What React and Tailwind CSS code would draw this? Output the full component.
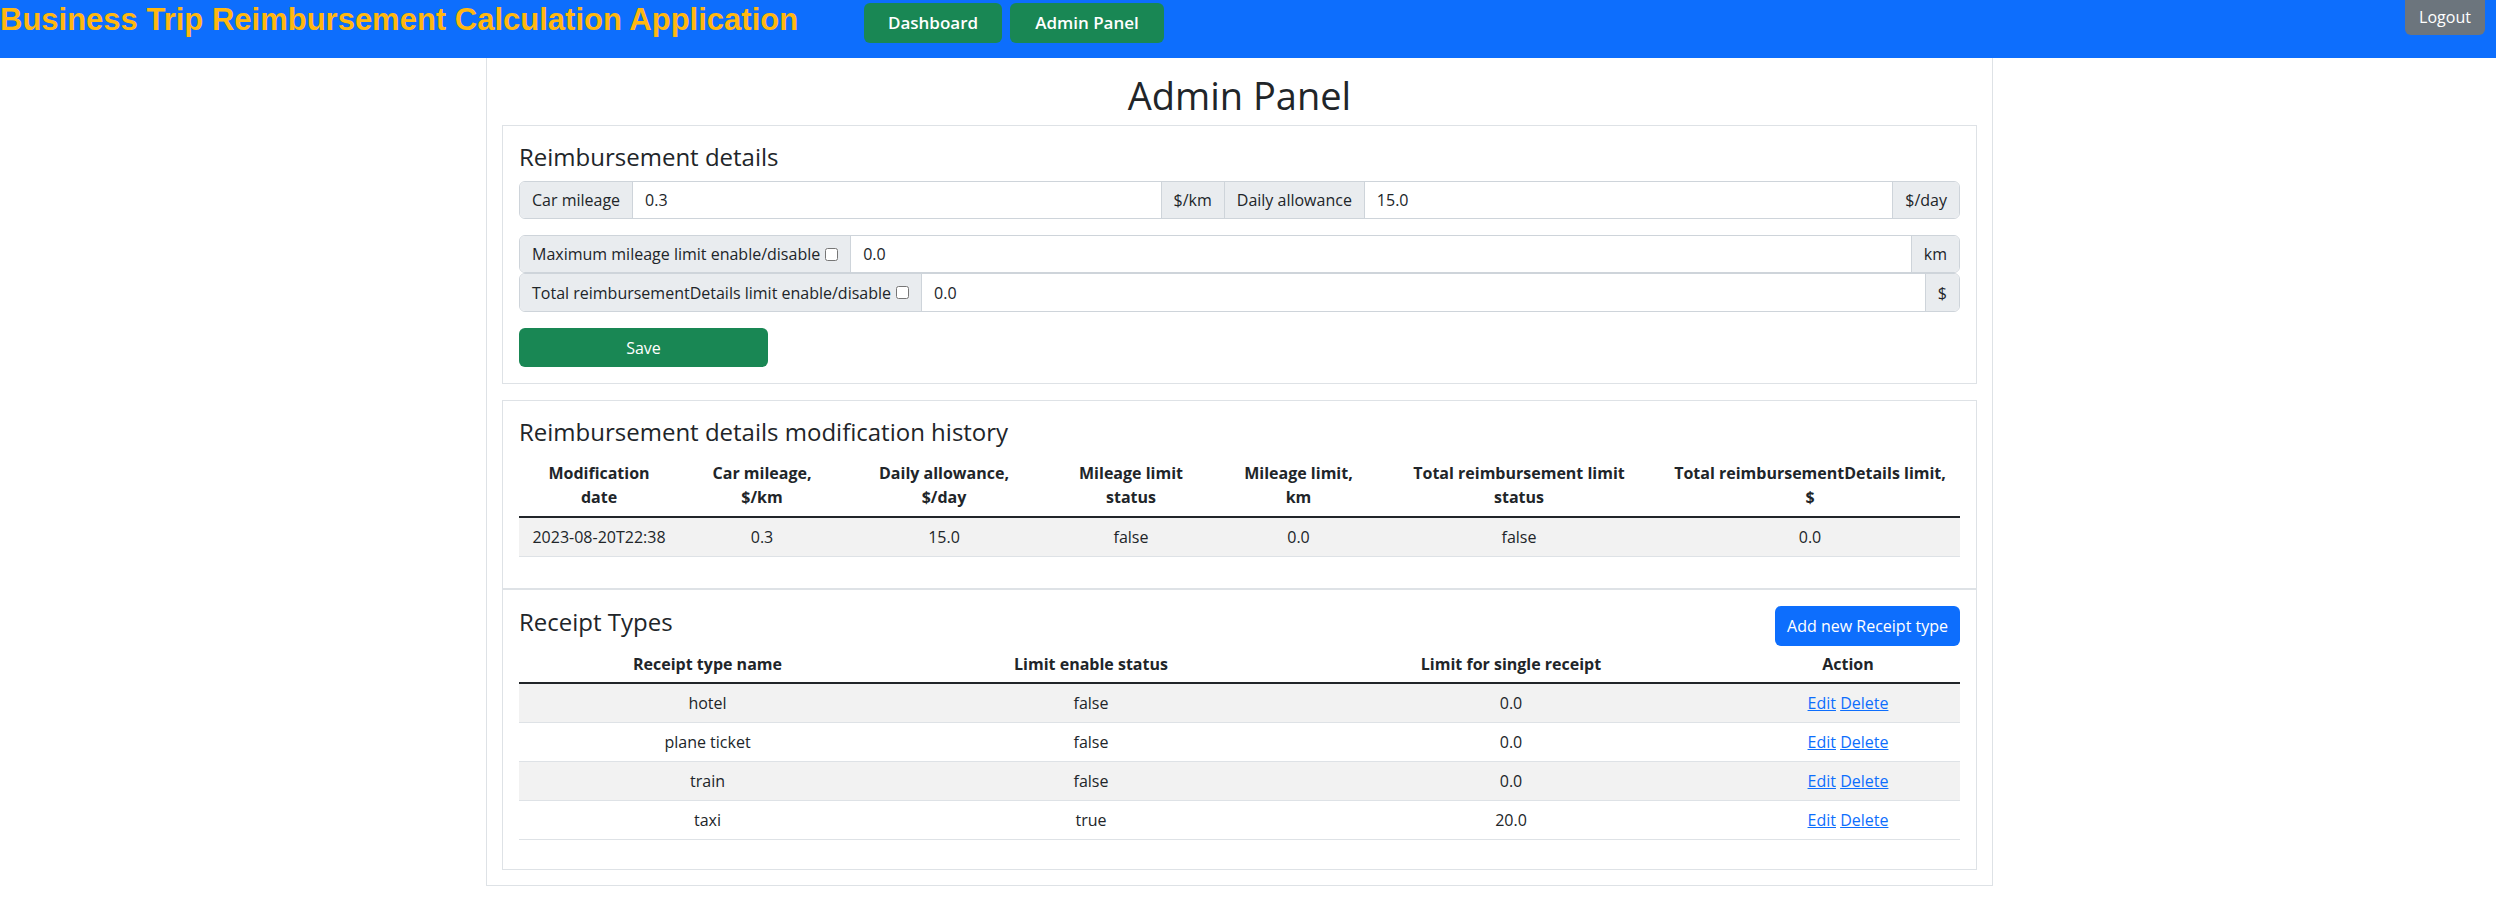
import React from 'react'

const history = [
  { date: '2023-08-20T22:38', mileage: '0.3', allowance: '15.0', mileageStatus: 'false', mileageLimit: '0.0', totalStatus: 'false', totalLimit: '0.0' },
]

const receiptTypes = [
  { name: 'hotel', enabled: 'false', limit: '0.0' },
  { name: 'plane ticket', enabled: 'false', limit: '0.0' },
  { name: 'train', enabled: 'false', limit: '0.0' },
  { name: 'taxi', enabled: 'true', limit: '20.0' },
]

function Addon({ children, className = '' }) {
  return (
    <span className={`flex items-center whitespace-nowrap bg-[#e9ecef] px-3 text-[#212529] ${className}`}>
      {children}
    </span>
  )
}

function Field({ value, className = '' }) {
  return (
    <input
      type="text"
      defaultValue={value}
      className={`min-w-0 flex-1 bg-white px-3 text-[#212529] outline-none ${className}`}
    />
  )
}

function Card({ children, className = '' }) {
  return <div className={`border border-[#dee2e6] bg-white p-4 ${className}`}>{children}</div>
}

function App() {
  return (
    <div className="min-h-screen bg-white font-['Open_Sans',sans-serif] text-base text-[#212529]">
      <nav className="flex h-[58px] items-start bg-[#0d6efd]">
        <div className="w-[864px] shrink-0">
          <h1 className="whitespace-nowrap font-['Liberation_Sans',Arial,sans-serif] text-[31px] font-bold leading-[40px] text-[#ffb70f]">
            Business Trip Reimbursement Calculation Application
          </h1>
        </div>
        <div className="mt-[3px] flex gap-2">
          <button type="button" className="h-10 w-[138px] rounded-md bg-[#198754] text-[17px] font-semibold text-white">
            Dashboard
          </button>
          <button type="button" className="h-10 w-[154px] rounded-md bg-[#198754] text-[17px] font-semibold text-white">
            Admin Panel
          </button>
        </div>
        <button
          type="button"
          className="ml-auto mr-[11px] flex h-[35px] w-[80px] items-center justify-center rounded-b-md bg-[#6c757d] pb-[2px] text-white"
        >
          Logout
        </button>
      </nav>

      <main className="ml-[486px] w-[1507px] border border-t-0 border-[#dee2e6] px-[15px] pb-[15px] pt-[13px]">
        <h1 className="mb-[6px] text-center text-[38px] font-medium leading-[48px]">Admin Panel</h1>

        <Card className="mb-4">
          <h4 className="mb-[10px] text-2xl font-medium leading-[29px]">Reimbursement details</h4>

          <div className="mb-4 flex h-[38px] overflow-hidden rounded-md border border-[#ced4da]">
            <Addon className="border-r border-[#ced4da]">Car mileage</Addon>
            <Field value="0.3" />
            <Addon className="border-x border-[#ced4da]">$/km</Addon>
            <Addon className="border-r border-[#ced4da]">Daily allowance</Addon>
            <Field value="15.0" />
            <Addon className="border-l border-[#ced4da]">$/day</Addon>
          </div>

          <div className="flex h-[38px] overflow-hidden rounded-md border border-[#ced4da]">
            <Addon className="border-r border-[#ced4da]">
              Maximum mileage limit enable/disable
              <input type="checkbox" className="ml-[5px] h-[13px] w-[13px]" />
            </Addon>
            <Field value="0.0" />
            <Addon className="border-l border-[#ced4da]">km</Addon>
          </div>
          <div className="flex h-[39px] overflow-hidden rounded-md border border-[#ced4da]">
            <Addon className="border-r border-[#ced4da]">
              Total reimbursementDetails limit enable/disable
              <input type="checkbox" className="ml-[5px] h-[13px] w-[13px]" />
            </Addon>
            <Field value="0.0" />
            <Addon className="border-l border-[#ced4da]">$</Addon>
          </div>

          <button type="button" className="mt-4 h-[39px] w-[249px] rounded-md bg-[#198754] text-white">
            Save
          </button>
        </Card>

        <Card>
          <h4 className="mb-2 text-2xl font-medium leading-[29px]">Reimbursement details modification history</h4>
          <table className="mb-[15px] w-full table-fixed border-collapse text-center">
            <colgroup>
              <col className="w-[160px]" />
              <col className="w-[166px]" />
              <col className="w-[198px]" />
              <col className="w-[176px]" />
              <col className="w-[159px]" />
              <col className="w-[282px]" />
              <col />
            </colgroup>
            <thead>
              <tr className="border-b-2 border-[#212529] font-bold leading-6">
                <th className="px-2 py-[7px]">Modification<br />date</th>
                <th className="px-2 py-[7px]">Car mileage,<br />$/km</th>
                <th className="px-2 py-[7px]">Daily allowance,<br />$/day</th>
                <th className="px-2 py-[7px]">Mileage limit<br />status</th>
                <th className="px-2 py-[7px]">Mileage limit,<br />km</th>
                <th className="whitespace-nowrap px-2 py-[7px]">Total reimbursement limit<br />status</th>
                <th className="whitespace-nowrap px-2 py-[7px]">Total reimbursementDetails limit,<br />$</th>
              </tr>
            </thead>
            <tbody>
              {history.map((row, index) => (
                <tr key={row.date} className={`border-b border-[#dee2e6] leading-6 ${index % 2 === 0 ? 'bg-[#f2f2f2]' : ''}`}>
                  <td className="px-2 py-[7px]">{row.date}</td>
                  <td className="px-2 py-[7px]">{row.mileage}</td>
                  <td className="px-2 py-[7px]">{row.allowance}</td>
                  <td className="px-2 py-[7px]">{row.mileageStatus}</td>
                  <td className="px-2 py-[7px]">{row.mileageLimit}</td>
                  <td className="px-2 py-[7px]">{row.totalStatus}</td>
                  <td className="px-2 py-[7px]">{row.totalLimit}</td>
                </tr>
              ))}
            </tbody>
          </table>
        </Card>

        <Card>
          <div className="flex items-start justify-between">
            <h4 className="mt-[1px] text-2xl font-medium leading-[29px]">Receipt Types</h4>
            <button type="button" className="h-10 rounded-md bg-[#0d6efd] px-[12px] text-white">
              Add new Receipt type
            </button>
          </div>
          <table className="mb-[13px] w-full table-fixed border-collapse text-center">
            <colgroup>
              <col className="w-[377px]" />
              <col className="w-[390px]" />
              <col className="w-[450px]" />
              <col />
            </colgroup>
            <thead>
              <tr className="border-b-2 border-[#212529] font-bold leading-6">
                <th className="px-2 py-[6px]">Receipt type name</th>
                <th className="px-2 py-[6px]">Limit enable status</th>
                <th className="px-2 py-[6px]">Limit for single receipt</th>
                <th className="px-2 py-[6px]">Action</th>
              </tr>
            </thead>
            <tbody>
              {receiptTypes.map((row, index) => (
                <tr key={row.name} className={`border-b border-[#dee2e6] leading-6 ${index % 2 === 0 ? 'bg-[#f2f2f2]' : ''}`}>
                  <td className="px-2 py-[7px]">{row.name}</td>
                  <td className="px-2 py-[7px]">{row.enabled}</td>
                  <td className="px-2 py-[7px]">{row.limit}</td>
                  <td className="px-2 py-[7px]">
                    <a href="#" className="text-[#0d6efd] underline">Edit</a>{' '}
                    <a href="#" className="text-[#0d6efd] underline">Delete</a>
                  </td>
                </tr>
              ))}
            </tbody>
          </table>
        </Card>
      </main>
    </div>
  )
}

export default App
